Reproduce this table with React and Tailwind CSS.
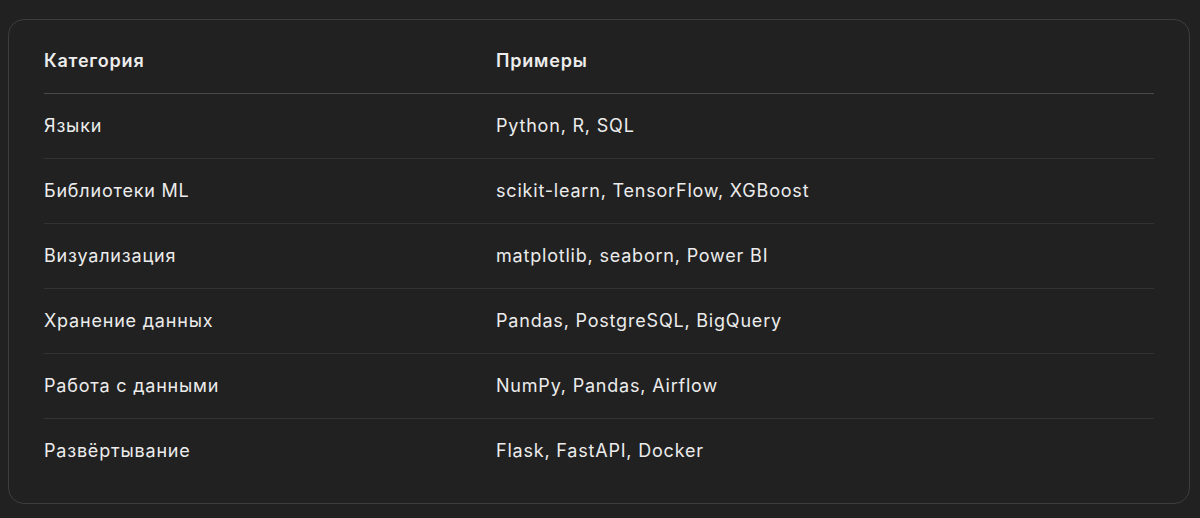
import React from 'react';

const rows = [
    ['Языки', 'Python, R, SQL'],
    ['Библиотеки ML', 'scikit-learn, TensorFlow, XGBoost'],
    ['Визуализация', 'matplotlib, seaborn, Power BI'],
    ['Хранение данных', 'Pandas, PostgreSQL, BigQuery'],
    ['Работа с данными', 'NumPy, Pandas, Airflow'],
    ['Развёртывание', 'Flask, FastAPI, Docker'],
];

const App = () => {
    return (
        <div className="min-h-[518px] bg-[#212121] pt-[19px] pl-[8px] pr-[10px]" style={{ fontFamily: 'Inter, "Noto Sans", sans-serif' }}>
            <div className="rounded-2xl border border-[#3d3d3d] bg-[#212121] pl-[35px] pr-[35px] pt-[9px] pb-[20px]">
                <table className="w-full border-collapse text-[18px] tracking-[0.8px] text-[#ececec]">
                    <thead>
                        <tr className="border-b border-[#4a4a4a]">
                            <th className="w-[452px] py-5 text-left font-semibold leading-6">Категория</th>
                            <th className="py-5 text-left font-semibold leading-6">Примеры</th>
                        </tr>
                    </thead>
                    <tbody>
                        {rows.map(([cat, ex], i) => (
                            <tr key={cat} className={i < rows.length - 1 ? 'border-b border-[#333333]' : ''}>
                                <td className="py-5 leading-6">{cat}</td>
                                <td className="py-5 leading-6">{ex}</td>
                            </tr>
                        ))}
                    </tbody>
                </table>
            </div>
        </div>
    );
};

export default App;
